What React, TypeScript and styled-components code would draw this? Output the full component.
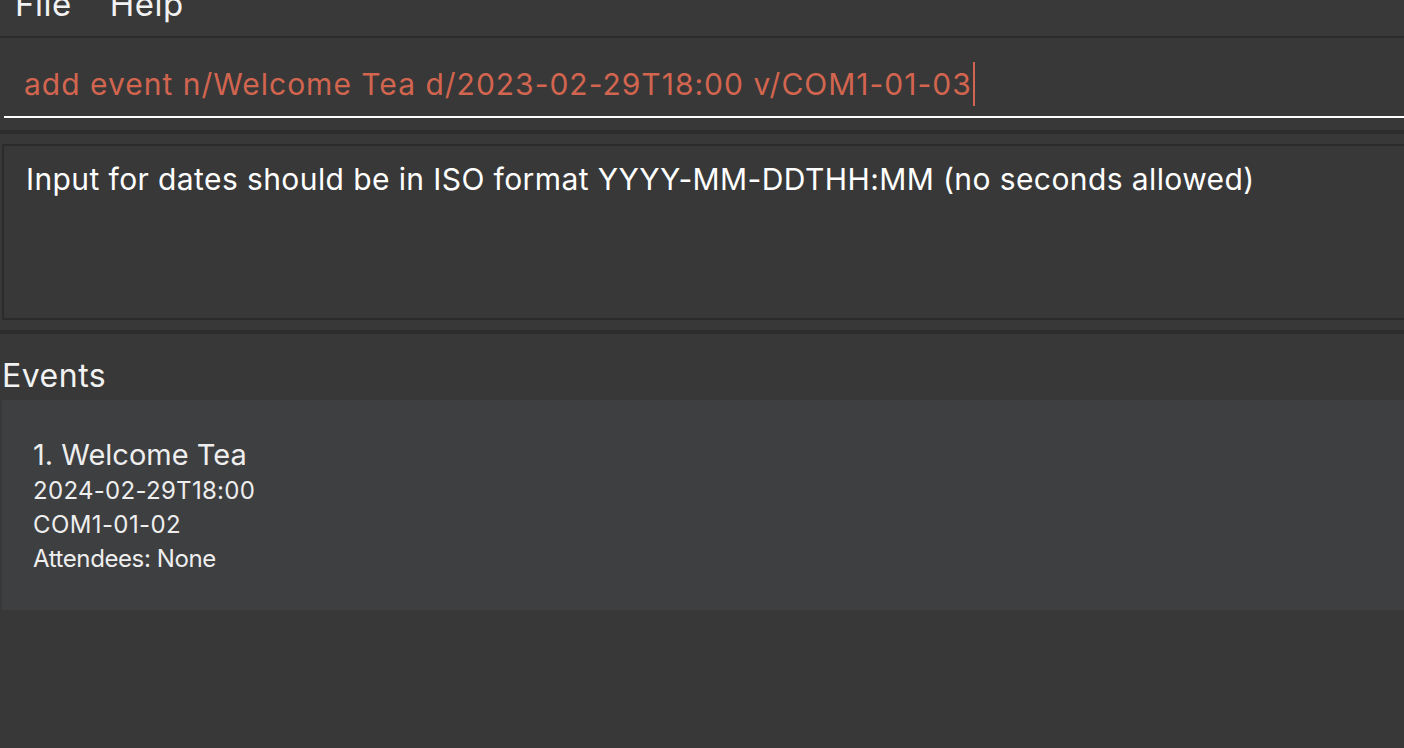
import React from "react";
import styled, { createGlobalStyle } from "styled-components";

const Global = createGlobalStyle`
  html, body { margin: 0; padding: 0; background: #383838; overflow: hidden; }
  body { font-family: Inter, "Open Sans", sans-serif; width: 1404px; height: 748px; }
`;

const Window = styled.div`
  display: flex;
  flex-direction: column;
  width: 1404px;
  height: 748px;
  overflow: hidden;
  background: #383838;
`;

const MenuBar = styled.div`
  display: flex;
  gap: 38px;
  height: 36px;
  flex: none;
  padding-left: 15px;
  overflow: hidden;
  border-bottom: 2px solid #2b2b2b;
  background: #393939;
`;

const MenuItem = styled.span`
  font-size: 33px;
  letter-spacing: 0.5px;
  line-height: 1;
  color: #f2f2f2;
  margin-top: -12px;
`;

const CommandPane = styled.div`
  height: 96px;
  flex: none;
  padding: 0 0 0 4px;
  display: flex;
  flex-direction: column;
  border-bottom: 4px solid #2c2c2c;
  box-sizing: border-box;
`;

const CommandField = styled.div`
  height: 80px;
  box-sizing: border-box;
  display: flex;
  align-items: center;
  padding: 14px 0 0 20px;
  border-bottom: 2px solid #ffffff;
  font-size: 30px;
  letter-spacing: 1px;
  color: #d2654f;
  white-space: nowrap;
`;

const Caret = styled.span`
  display: inline-block;
  width: 2px;
  height: 44px;
  background: #d2654f;
  margin-left: 1px;
`;

const ResultPane = styled.div`
  height: 200px;
  flex: none;
  padding: 10px 0 10px 2px;
  box-sizing: border-box;
  border-bottom: 4px solid #2c2c2c;
  display: flex;
`;

const ResultBox = styled.div`
  flex: 1;
  margin-right: -4px;
  border: 2px solid #2b2b2b;
  padding: 15px 0 0 22px;
  font-size: 30px;
  letter-spacing: 0.4px;
  color: #ffffff;
  white-space: nowrap;
  overflow: hidden;
`;

const EventsPane = styled.div`
  flex: 1;
  display: flex;
  flex-direction: column;
  padding-left: 2px;
`;

const EventsLabel = styled.div`
  font-size: 32px;
  letter-spacing: 0.5px;
  color: #f2f2f2;
  height: 66px;
  display: flex;
  align-items: flex-end;
  padding-bottom: 5px;
  box-sizing: border-box;
`;

const EventList = styled.div`
  height: 210px;
  background: #3e3f41;
  padding: 36px 0 0 31px;
  box-sizing: border-box;
`;

const Card = styled.div`
  display: flex;
  flex-direction: column;
  color: #eeeeee;
`;

const CardTitle = styled.div`
  font-size: 29px;
  line-height: 38px;
`;

const CardLine = styled.div<{ $spacing?: number }>`
  font-size: 24px;
  letter-spacing: ${(p) => (p.$spacing ?? 0.3)}px;
  line-height: 34px;
`;

export default function App() {
  return (
    <>
      <Global />
      <Window>
        <MenuBar>
          <MenuItem>File</MenuItem>
          <MenuItem>Help</MenuItem>
        </MenuBar>
        <CommandPane>
          <CommandField>
            add event n/Welcome Tea d/2023-02-29T18:00 v/COM1-01-03
            <Caret />
          </CommandField>
        </CommandPane>
        <ResultPane>
          <ResultBox>
            Input for dates should be in ISO format YYYY-MM-DDTHH:MM (no seconds allowed)
          </ResultBox>
        </ResultPane>
        <EventsPane>
          <EventsLabel>Events</EventsLabel>
          <EventList>
            <Card>
              <CardTitle>1. Welcome Tea</CardTitle>
              <CardLine>2024-02-29T18:00</CardLine>
              <CardLine $spacing={0.4}>COM1-01-02</CardLine>
              <CardLine $spacing={-0.4}>Attendees: None</CardLine>
            </Card>
          </EventList>
        </EventsPane>
      </Window>
    </>
  );
}
